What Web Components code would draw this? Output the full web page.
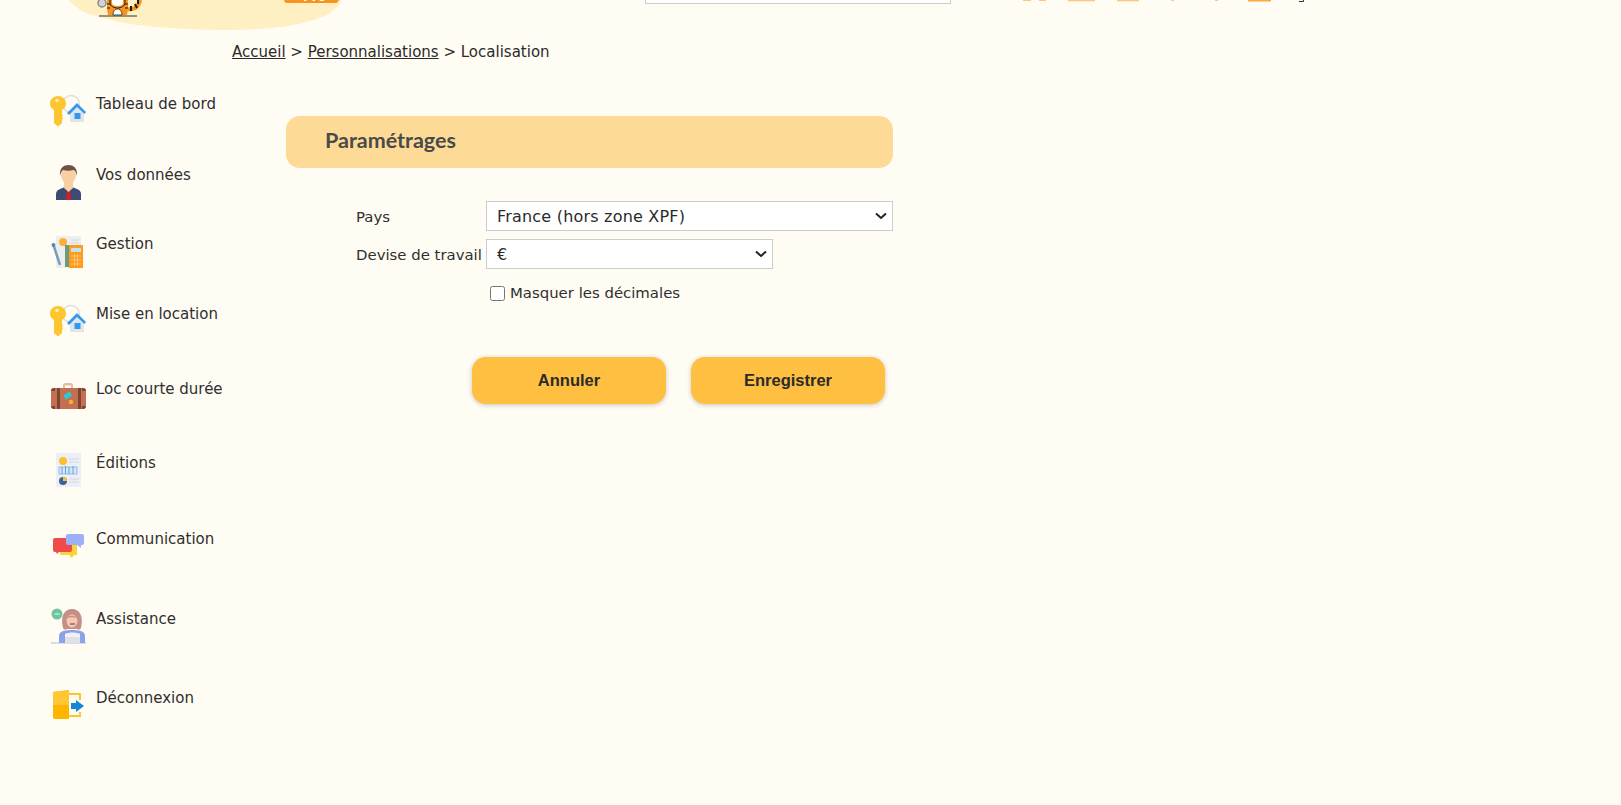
<!DOCTYPE html>
<html lang="fr">
<head>
<meta charset="utf-8">
<title>Localisation</title>
<style>
  html, body { margin: 0; height: 100%; overflow: hidden; background: #fffcf3; }
  body { font-family: "DejaVu Sans", Verdana, sans-serif; color: #2b2b2b; }
</style>
</head>
<body>
<app-shell>
  <top-header slot="top"></top-header>
  <side-menu slot="side">
    <menu-entry label="Tableau de bord" icon="keyhouse" h="71"></menu-entry>
    <menu-entry label="Vos données" icon="person" h="69"></menu-entry>
    <menu-entry label="Gestion" icon="calc" h="70"></menu-entry>
    <menu-entry label="Mise en location" icon="keyhouse" h="75"></menu-entry>
    <menu-entry label="Loc courte durée" icon="suitcase" h="74"></menu-entry>
    <menu-entry label="Éditions" icon="report" h="76"></menu-entry>
    <menu-entry label="Communication" icon="chat" h="80"></menu-entry>
    <menu-entry label="Assistance" icon="agent" h="79"></menu-entry>
    <menu-entry label="Déconnexion" icon="logout" h="70"></menu-entry>
  </side-menu>
  <bread-crumb slot="main"></bread-crumb>
  <settings-form slot="main"></settings-form>
</app-shell>

<script>
// every icon is drawn on a 37x37 box, measured from the reference
const ICONS = {
  keyhouse: `<circle cx="21" cy="11" r="8.500" fill="none" stroke="#dcdcdc" stroke-width="1.500"/>
    <path d="M8 3c4.500 0 8 3.200 8 7.500 0 3.200-2 5.500-4 6.500v4l1 1.500-1 1.500 1 1.500-1 1.500v3l-4 3.500-4-3.500V17C2 16 0 13.700 0 10.500 0 6.200 3.500 3 8 3z" fill="#fdc52e"/>
    <circle cx="7" cy="7.500" r="1.800" fill="#fff0b8"/>
    <path d="M20 20l7-6 7 6v9H20z" fill="#e4e4e6"/>
    <path d="M17 20l10-10 9 9-1.500 2-7.500-7-8 8z" fill="#2e9bf0"/>
    <rect x="24.500" y="20" width="6" height="6" fill="#2e9bf0"/>`,
  person: `<path d="M6 36v-6c0-3 2-4 4-5l5-2h7l5 2c2 1 4 2 4 5v6z" fill="#3d4a72"/>
    <path d="M16.500 25h4l-.5 2 1 9h-5l1-9z" fill="#cf2027"/>
    <path d="M14 18h9v6l-4.500 4-4.500-4z" fill="#f8cfa3"/>
    <ellipse cx="18.500" cy="11" rx="7.500" ry="9" fill="#f8cfa3"/>
    <path d="M10 12C9 4 14 1 18.500 1S28 4 27 12c-.5-3-1.500-5-3-6-4 1-8 1-11 0-1.500 1-2.500 3-3 6z" fill="#6d5146"/>`,
  calc: `<rect x="6" y="3" width="25" height="32" fill="#eceef0"/>
    <circle cx="13" cy="9" r="4" fill="#fbb03b"/><path d="M21 7h8M21 10h8" stroke="#d4d7da"/>
    <path d="M3.500 12l6.500 20" stroke="#7c9bb8" stroke-width="2.500"/><circle cx="3.500" cy="12" r="2" fill="#3e8fd0"/>
    <rect x="15" y="12" width="4.500" height="22" fill="#6d9a78"/>
    <rect x="19" y="12" width="14" height="23" fill="#ff9a1f"/><rect x="21" y="15" width="10" height="4" fill="#b8e7ee"/>
    <path d="M21 23h10M21 27h10M21 31h10M24.500 21v12M27.500 21v12" stroke="#ffc470"/>`,
  suitcase: `<path d="M13 10V7.500C13 6 14 5 15.500 5h5C22 5 23 6 23 7.500V10h-2V7.500h-6V10z" fill="#e4bca8"/>
    <rect x="1" y="10" width="35" height="21" rx="4" fill="#c46f51"/>
    <path d="M7 10h3v21H7zM28 10h3v21h-3z" fill="#7c4534"/>
    <path d="M1 13a3 3 0 013-3h1v3zM32 10h1a3 3 0 013 3h-4zM1 28h4v3H4a3 3 0 01-3-3zM32 28h4a3 3 0 01-3 3h-1z" fill="#7c4534"/>
    <path d="M13.500 17.500l6-4 2.500 4-6 4z" fill="#1fd0dc"/><circle cx="21" cy="24" r="2.200" fill="#f4b13c"/>`,
  report: `<rect x="6" y="1" width="25" height="34" fill="#eceff6"/>
    <circle cx="13" cy="9" r="4" fill="#fbc02d"/><path d="M19 7h10M19 10h10M19 27h10M19 30h10" stroke="#d3d6de"/>
    <rect x="9" y="15" width="18" height="7" fill="#d5e6f6" stroke="#7eb4e2" stroke-width=".8"/>
    <path d="M12 15v7M15.500 14v8M19 15v7M23 14v8" stroke="#5fa6e0"/>
    <circle cx="13" cy="29" r="4" fill="#3f5fa3"/><path d="M13 29v-4a4 4 0 014 4z" fill="#fbc02d"/>`,
  chat: `<path d="M10 17h17v10h-3l-2 3-3-3h-9z" fill="#fdd33a"/>
    <path d="M3 12a2 2 0 012-2h15a2 2 0 012 2v10a2 2 0 01-2 2H9l-2 2-1-2H5a2 2 0 01-2-2z" fill="#ef4b4b"/>
    <path d="M16 8a2 2 0 012-2h14a2 2 0 012 2v7a2 2 0 01-2 2h-1v3l-4-3h-9a2 2 0 01-2-2z" fill="#9bb0f6"/>`,
  agent: `<path d="M1 35h35" stroke="#b7bdd6"/>
    <path d="M9 35v-7c0-4 4-6 13-6s13 2 13 6v7z" fill="#8ba3e8"/><path d="M15 35v-9c3-2 12-2 15 0v9z" fill="#f2f2f5"/><rect x="15" y="29" width="15" height="6" fill="#dfe1ea"/>
    <path d="M13 20C10 7 15 1 22 1s12 6 9 19c-1 2-3 2-4 1H17c-1 1-3 1-4-1z" fill="#c68f86"/>
    <ellipse cx="22" cy="13" rx="5.500" ry="6.500" fill="#f7c6ae"/><path d="M16 10c3-3 9-3 12 0-4-1-8-1-12 0z" fill="#c68f86"/>
    <path d="M20 16h5" stroke="#55423e"/>
    <circle cx="7" cy="6" r="5.500" fill="#6ec6a0"/><path d="M4.500 6h5" stroke="#e6f6ee"/>`,
  logout: `<path d="M19 7h11v6M30 25v4H19" fill="none" stroke="#fdc52e" stroke-width="2"/>
    <path d="M3 5l16-2v29H5a2 2 0 01-2-2z" fill="#ffb400"/><path d="M3 5l16-2v15H3z" fill="#ffc733"/>
    <path d="M21 16h5v-3l8 6-8 6v-3h-5z" fill="#1287d4"/>`
};

class AppShell extends HTMLElement {
  constructor() {
    super();
    this.attachShadow({ mode: 'open' }).innerHTML = `
      <style>
        :host { display: block; }
        .body { display: grid; grid-template-columns: 232px 1fr; }
      </style>
      <slot name="top"></slot>
      <div class="body">
        <div><slot name="side"></slot></div>
        <div><slot name="main"></slot></div>
      </div>`;
  }
}

class TopHeader extends HTMLElement {
  constructor() {
    super();
    this.attachShadow({ mode: 'open' }).innerHTML = `
      <style>
        :host { display: flex; height: 32px; overflow: hidden; align-items: flex-start; padding-left: 66px; }
        .logo { width: 281px; height: 32px; flex: none; }
        .search { width: 304px; height: 3px; margin-left: 298px; flex: none; border: 1px solid #ccc; border-top: 0; background: #fff; }
        .tabs { margin-left: 68px; flex: none; width: 316px; height: 10px; display: block; }
      </style>
      <svg class="logo" viewBox="0 0 281 32">
        <path d="M3 0c6 8 16 14 31 17 24 8 70 13 127 13 30 0 50-2 66-5 28-5 44-13 48-25z" fill="#fff0c3"/>
        <g transform="translate(32 0)">
          <circle cx="4" cy="3" r="4" fill="#d2d2d2" stroke="#8a8a8a" stroke-width="1.500"/>
          <path d="M9 0h21v9l-1 6H10L9 9z" fill="#f7941d"/>
          <path d="M14 0h11v3c0 2-2 3-5.500 3S14 5 14 3z" fill="#fff"/>
          <path d="M12 0v3c0 3 4 5 7.500 5S27 6 27 3V0" fill="none" stroke="#1a1a1a"/>
          <path d="M15 15c0-4 2-6 4.500-6s4.500 2 4.500 6z" fill="#fff" stroke="#1a1a1a" stroke-width=".8"/>
          <path d="M9 4h3M9 8h3M27 4h3M27 8h3" stroke="#1a1a1a"/>
          <path d="M1 16h38" stroke="#333" stroke-width="1.200"/>
          <path d="M30 9c6 1 11-2 12-9" fill="none" stroke="#f7941d" stroke-width="4"/>
          <path d="M33 6v5M37 4l2 4M40 0v4" stroke="#1a1a1a" stroke-width="2"/>
        </g>
        <path d="M218 0h55l-1 1.500c-.5 1-1.500 1.500-3 1.500h-48c-1.500 0-2.500-.8-3-3z" fill="#f7941d"/>
        <text x="237" y="1.300" font-family="DejaVu Sans" font-weight="700" font-size="12" fill="#fff">Pro</text>
      </svg>
      <div class="search"></div>
      <svg class="tabs" viewBox="0 0 316 10">
        <g fill="#ffc67c">
          <rect x="4" y="0" width="8" height="1"/><rect x="20" y="0" width="7" height="1"/>
          <rect x="49" y="0" width="27" height="1.300"/><rect x="98" y="0" width="22" height="1.300"/>
          <rect x="152" y="0" width="3" height="1"/><rect x="196" y="0" width="3" height="1"/>
        </g>
        <rect x="229" y="0" width="23" height="1.500" fill="#ffa63f"/>
        <path d="M280 1.500h4.500V0" fill="none" stroke="#2c3550" stroke-width="1"/>
      </svg>`;
  }
}

class SideMenu extends HTMLElement {
  constructor() {
    super();
    this.attachShadow({ mode: 'open' }).innerHTML = `
      <style>
        :host { display: flex; flex-direction: column; padding: 58px 0 0 50px; }
      </style>
      <slot></slot>`;
  }
}

class MenuEntry extends HTMLElement {
  connectedCallback() {
    if (this.shadowRoot) return;
    this.attachShadow({ mode: 'open' }).innerHTML = `
      <style>
        :host { display: flex; gap: 9px; align-items: flex-start; height: ${this.getAttribute('h')}px; flex: none; }
        svg { width: 37px; height: 37px; flex: none; margin-top: 3px; }
        a { font-size: 15px; line-height: 18px; margin-top: 5px; white-space: nowrap; color: #2f2f2f; }
      </style>
      <svg viewBox="0 0 37 37">${ICONS[this.getAttribute('icon')]}</svg>
      <a>${this.getAttribute('label')}</a>`;
  }
}

class BreadCrumb extends HTMLElement {
  constructor() {
    super();
    this.attachShadow({ mode: 'open' }).innerHTML = `
      <style>
        :host { display: block; font-size: 15px; line-height: 18px; padding-top: 11px; color: #2b2b2b; }
        a { color: inherit; text-decoration: underline; }
      </style>
      <a>Accueil</a> &gt; <a>Personnalisations</a> &gt; Localisation`;
  }
}

class SettingsForm extends HTMLElement {
  constructor() {
    super();
    this.attachShadow({ mode: 'open' }).innerHTML = `
      <style>
        :host { display: block; width: 607px; margin: 55px 0 0 54px; font-size: 14.900px; color: #2f2f2f; }
        h2 { margin: 0; height: 52px; box-sizing: border-box; padding: 0 0 3px 39px; display: flex; align-items: center;
             background: #fddb96; border-radius: 14px; font: bold 21.500px/1 Lato, sans-serif; color: #4a4a4a; }
        .rows { display: grid; grid-template-columns: 130px 1fr; row-gap: 8px; margin: 33px 0 0 70px; align-items: center; }
        label { padding-top: 2px; }
        select { appearance: none; height: 30px; box-sizing: border-box; font: inherit; font-size: 16px; letter-spacing: .2px; color: #2b2b2b;
                 border: 1px solid #ccc; border-radius: 0; padding: 0 6px 0 10px; display: block;
                 background: #fff url("data:image/svg+xml,%3Csvg xmlns='http://www.w3.org/2000/svg' width='12' height='8'%3E%3Cpath d='M1 1.500l5 4.500 5-4.500' fill='none' stroke='%23222' stroke-width='2'/%3E%3C/svg%3E") no-repeat right 5px center; }
        .wide { width: 407px; }
        .narrow { width: 287px; }
        .check { grid-column: 2; display: flex; align-items: center; padding: 0 0 0 4px; height: 30px; margin-top: 1px; }
        input { width: 15px; height: 15px; margin: 0 5px 0 0; }
        .actions { display: flex; gap: 25px; margin: 49px 0 0 186px; }
      </style>
      <h2>Paramétrages</h2>
      <div class="rows">
        <label>Pays</label>
        <select class="wide"><option>France (hors zone XPF)</option></select>
        <label>Devise de travail</label>
        <select class="narrow"><option>€</option></select>
        <label class="check"><input type="checkbox">Masquer les décimales</label>
      </div>
      <div class="actions">
        <action-button>Annuler</action-button>
        <action-button>Enregistrer</action-button>
      </div>`;
  }
}

class ActionButton extends HTMLElement {
  constructor() {
    super();
    this.attachShadow({ mode: 'open' }).innerHTML = `
      <style>
        :host { display: flex; width: 194px; height: 47px; align-items: center; justify-content: center;
                background: #ffbf40; border-radius: 14px; box-shadow: 0 1px 5px rgba(0,0,0,.22);
                font: bold 16.500px "Liberation Sans", Arial, sans-serif; color: #2b2b2b; cursor: pointer; }
      </style>
      <slot></slot>`;
  }
}

customElements.define('app-shell', AppShell);
customElements.define('top-header', TopHeader);
customElements.define('side-menu', SideMenu);
customElements.define('menu-entry', MenuEntry);
customElements.define('bread-crumb', BreadCrumb);
customElements.define('settings-form', SettingsForm);
customElements.define('action-button', ActionButton);
</script>
</body>
</html>
